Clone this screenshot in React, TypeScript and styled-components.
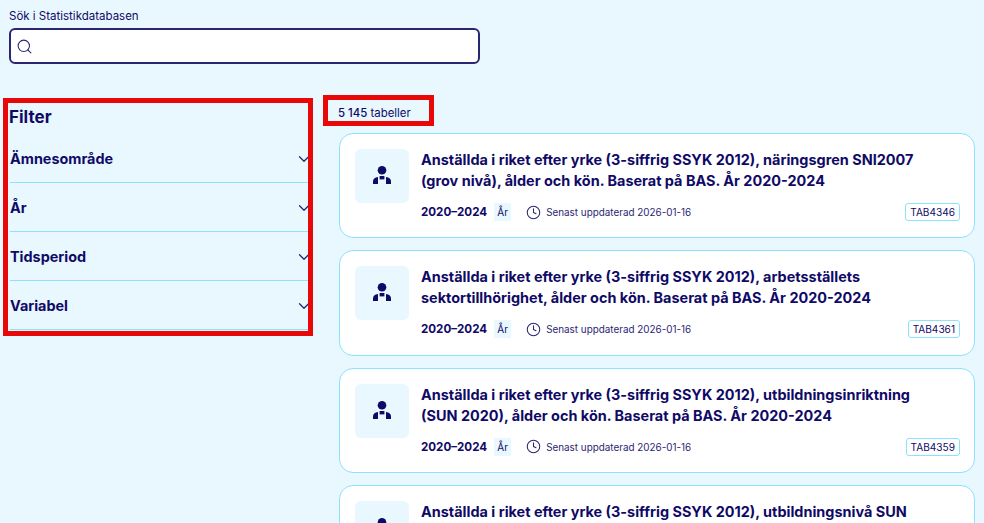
import * as React from 'react'
import styled, { createGlobalStyle } from 'styled-components'
import { ChevronDown, Clock, Search } from 'lucide-react'

const navy = '#0f0a66'
const line = '#8be2ff'

const GlobalStyle = createGlobalStyle`
  html, body {
    margin: 0;
    height: 100%;
    overflow: hidden;
    background: #e9f7ff;
    color: ${navy};
    font-family: Inter, "Liberation Sans", sans-serif;
  }
`

const Page = styled.div`
  width: 984px;
  height: 523px;
  overflow: hidden;
  padding: 9px 9px 0;
  box-sizing: border-box;
`

const SearchLabel = styled.label`
  display: block;
  font-size: 11.5px;
  line-height: 15px;
  margin-bottom: 4px;
`

const SearchBox = styled.div`
  width: 471px;
  height: 36px;
  box-sizing: border-box;
  display: flex;
  align-items: center;
  gap: 8px;
  padding: 0 5px;
  background: #fff;
  border: 2px solid #2b2672;
  border-radius: 6px;
`

const Columns = styled.div`
  display: grid;
  grid-template-columns: 299px 636px;
  column-gap: 31px;
  align-items: start;
  margin-top: 31px;
`

const Sidebar = styled.aside`
  position: relative;
  padding-top: 10px;
`

const Highlight = styled.div<{ $inset: string }>`
  position: absolute;
  inset: ${p => p.$inset};
  border: 5px solid #e80808;
  pointer-events: none;
`

const FilterTitle = styled.h2`
  margin: 0 0 5px;
  font-size: 17px;
  line-height: 24px;
  font-weight: 700;
`

const FilterRow = styled.div`
  display: flex;
  align-items: center;
  justify-content: space-between;
  height: 49px;
  padding-top: 1px;
  box-sizing: border-box;
  margin-left: 1px;
  border-bottom: 1px solid ${line};
  font-size: 14.4px;
  font-weight: 700;
  color: ${navy};
`

const RowChevron = styled(ChevronDown)`
  margin-right: -5px;
  color: #2b2672;
`

const Main = styled.main`
  display: flex;
  flex-direction: column;
`

const Count = styled.div`
  position: relative;
  width: fit-content;
  height: 38px;
  margin-left: -1px;
  font-size: 11.4px;
  line-height: 15px;
  padding-top: 11px;
  box-sizing: border-box;
`

const CountNumber = styled.span`
  font-weight: 500;
`

const CardList = styled.div`
  display: flex;
  flex-direction: column;
  gap: 12px;
`

const Card = styled.article`
  display: grid;
  grid-template-columns: 54px 1fr;
  column-gap: 12px;
  padding: 15px 14px 14px 15px;
  height: 105.4px;
  box-sizing: border-box;
  background: #fff;
  border: 1px solid ${line};
  border-radius: 14px;
  flex: none;
`

const IconTile = styled.div`
  width: 54px;
  height: 54px;
  display: flex;
  align-items: center;
  justify-content: center;
  background: #e9f7ff;
  border-radius: 6px;
`

const CardBody = styled.div`
  display: flex;
  flex-direction: column;
  min-width: 0;
`

const CardTitle = styled.h3`
  margin: 0;
  height: 42px;
  max-width: 510px;
  font-size: 14.45px;
  line-height: 21px;
  font-weight: 650;
`

const Meta = styled.div`
  display: flex;
  align-items: center;
  margin-top: 11px;
  height: 20px;
`

const Years = styled.span`
  font-size: 11.6px;
  font-weight: 650;
`

const Unit = styled.span`
  margin-left: 7px;
  width: 17px;
  height: 18px;
  display: flex;
  align-items: center;
  justify-content: center;
  background: #e9f7ff;
  font-size: 10px;
`

const Updated = styled.span`
  display: flex;
  align-items: center;
  gap: 5px;
  margin-left: 15px;
  font-size: 9.9px;
  color: #2b2672;
`

const TableId = styled.span`
  margin-left: auto;
  padding: 0 4px;
  height: 18px;
  display: flex;
  align-items: center;
  box-sizing: border-box;
  border: 1px solid ${line};
  border-radius: 3px;
  font-size: 10.1px;
`

const PersonIcon = () => (
  <svg width="20" height="22" viewBox="0 0 20 22" fill={navy} aria-hidden="true">
    <circle cx="10" cy="5.2" r="4.3" />
    <rect x="7.6" y="11" width="4.8" height="3.4" />
    <path d="M1 19v-2.6C1 14 2.6 12.4 6 12v7z" />
    <path d="M19 19v-2.6c0-2.4-1.6-4-5-4.4v7z" />
  </svg>
)

const filters = ['Ämnesområde', 'År', 'Tidsperiod', 'Variabel']

const tables = [
  {
    id: 'TAB4346',
    title: 'Anställda i riket efter yrke (3-siffrig SSYK 2012), näringsgren SNI2007 (grov nivå), ålder och kön. Baserat på BAS. År 2020-2024',
  },
  {
    id: 'TAB4361',
    title: 'Anställda i riket efter yrke (3-siffrig SSYK 2012), arbetsställets sektortillhörighet, ålder och kön. Baserat på BAS. År 2020-2024',
  },
  {
    id: 'TAB4359',
    title: 'Anställda i riket efter yrke (3-siffrig SSYK 2012), utbildningsinriktning (SUN 2020), ålder och kön. Baserat på BAS. År 2020-2024',
  },
  {
    id: 'TAB4358',
    title: 'Anställda i riket efter yrke (3-siffrig SSYK 2012), utbildningsnivå SUN 2020, ålder och kön. Baserat på BAS. År 2020-2024',
  },
]

export default function App() {
  return (
    <Page>
      <GlobalStyle />
      <SearchLabel>Sök i Statistikdatabasen</SearchLabel>
      <SearchBox>
        <Search size={17} strokeWidth={1.5} color="#2b2672" />
      </SearchBox>
      <Columns>
        <Sidebar>
          <FilterTitle>Filter</FilterTitle>
          {filters.map(name => (
            <FilterRow key={name}>
              {name}
              <RowChevron size={18} strokeWidth={1.7} />
            </FilterRow>
          ))}
          <Highlight $inset="3px -5px -6px -6px" />
        </Sidebar>
        <Main>
          <Count>
            <CountNumber>5 145</CountNumber> tabeller
            <Highlight $inset="0 -23px 7px -15px" />
          </Count>
          <CardList>
            {tables.map(t => (
              <Card key={t.id}>
                <IconTile>
                  <PersonIcon />
                </IconTile>
                <CardBody>
                  <CardTitle>{t.title}</CardTitle>
                  <Meta>
                    <Years>2020–2024</Years>
                    <Unit>År</Unit>
                    <Updated>
                      <Clock size={15} strokeWidth={1.7} />
                      Senast uppdaterad 2026-01-16
                    </Updated>
                    <TableId>{t.id}</TableId>
                  </Meta>
                </CardBody>
              </Card>
            ))}
          </CardList>
        </Main>
      </Columns>
    </Page>
  )
}
